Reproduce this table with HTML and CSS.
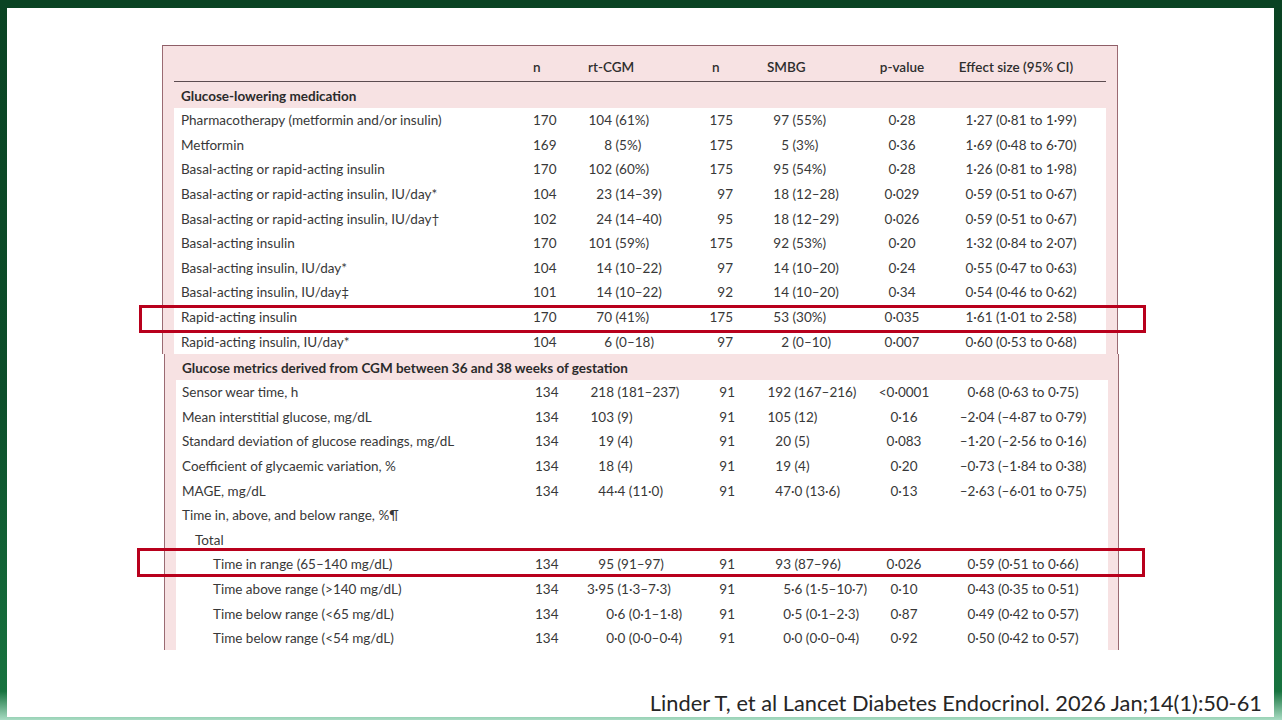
FILE: index.html
```html
<!DOCTYPE html>
<html lang="en">
<head>
<meta charset="utf-8">
<title>Table</title>
<link rel="stylesheet" href="styles.css">
</head>
<body>
<div class="slide">
  <section class="box box-a">
    <div class="row head">
      <div></div>
      <div class="h-n1">n</div>
      <div class="h-rt">rt-CGM</div>
      <div class="h-n2">n</div>
      <div class="h-sm">SMBG</div>
      <div class="h-p">p-value</div>
      <div class="h-ef">Effect size (95% CI)</div>
      <div></div>
    </div>
    <div class="sect">Glucose-lowering medication</div>
    <div class="white">
      <div class="row"><div class="lab">Pharmacotherapy (metformin and/or insulin)</div><div class="n1">170</div><div class="rt"><span class="a">104</span> (61%)</div><div class="n2">175</div><div class="sm"><span class="a">97</span> (55%)</div><div class="p">0·28</div><div class="ef">1·27 (0·81 to 1·99)</div></div>
      <div class="row"><div class="lab">Metformin</div><div class="n1">169</div><div class="rt"><span class="a">8</span> (5%)</div><div class="n2">175</div><div class="sm"><span class="a">5</span> (3%)</div><div class="p">0·36</div><div class="ef">1·69 (0·48 to 6·70)</div></div>
      <div class="row"><div class="lab">Basal-acting or rapid-acting insulin</div><div class="n1">170</div><div class="rt"><span class="a">102</span> (60%)</div><div class="n2">175</div><div class="sm"><span class="a">95</span> (54%)</div><div class="p">0·28</div><div class="ef">1·26 (0·81 to 1·98)</div></div>
      <div class="row"><div class="lab">Basal-acting or rapid-acting insulin, IU/day*</div><div class="n1">104</div><div class="rt"><span class="a">23</span> (14–39)</div><div class="n2">97</div><div class="sm"><span class="a">18</span> (12–28)</div><div class="p">0·029</div><div class="ef">0·59 (0·51 to 0·67)</div></div>
      <div class="row"><div class="lab">Basal-acting or rapid-acting insulin, IU/day†</div><div class="n1">102</div><div class="rt"><span class="a">24</span> (14–40)</div><div class="n2">95</div><div class="sm"><span class="a">18</span> (12–29)</div><div class="p">0·026</div><div class="ef">0·59 (0·51 to 0·67)</div></div>
      <div class="row"><div class="lab">Basal-acting insulin</div><div class="n1">170</div><div class="rt"><span class="a">101</span> (59%)</div><div class="n2">175</div><div class="sm"><span class="a">92</span> (53%)</div><div class="p">0·20</div><div class="ef">1·32 (0·84 to 2·07)</div></div>
      <div class="row"><div class="lab">Basal-acting insulin, IU/day*</div><div class="n1">104</div><div class="rt"><span class="a">14</span> (10–22)</div><div class="n2">97</div><div class="sm"><span class="a">14</span> (10–20)</div><div class="p">0·24</div><div class="ef">0·55 (0·47 to 0·63)</div></div>
      <div class="row"><div class="lab">Basal-acting insulin, IU/day‡</div><div class="n1">101</div><div class="rt"><span class="a">14</span> (10–22)</div><div class="n2">92</div><div class="sm"><span class="a">14</span> (10–20)</div><div class="p">0·34</div><div class="ef">0·54 (0·46 to 0·62)</div></div>
      <div class="row"><div class="lab">Rapid-acting insulin</div><div class="n1">170</div><div class="rt"><span class="a">70</span> (41%)</div><div class="n2">175</div><div class="sm"><span class="a">53</span> (30%)</div><div class="p">0·035</div><div class="ef">1·61 (1·01 to 2·58)</div></div>
      <div class="row"><div class="lab">Rapid-acting insulin, IU/day*</div><div class="n1">104</div><div class="rt"><span class="a">6</span> (0–18)</div><div class="n2">97</div><div class="sm"><span class="a">2</span> (0–10)</div><div class="p">0·007</div><div class="ef">0·60 (0·53 to 0·68)</div></div>
    </div>
  </section>
  <section class="box box-b">
    <div class="sect">Glucose metrics derived from CGM between 36 and 38 weeks of gestation</div>
    <div class="white">
      <div class="row"><div class="lab">Sensor wear time, h</div><div class="n1">134</div><div class="rt"><span class="a">218</span> (181–237)</div><div class="n2">91</div><div class="sm"><span class="a">192</span> (167–216)</div><div class="p">&lt;0·0001</div><div class="ef">0·68 (0·63 to 0·75)</div></div>
      <div class="row"><div class="lab">Mean interstitial glucose, mg/dL</div><div class="n1">134</div><div class="rt"><span class="a">103</span> (9)</div><div class="n2">91</div><div class="sm"><span class="a">105</span> (12)</div><div class="p">0·16</div><div class="ef">–2·04 (–4·87 to 0·79)</div></div>
      <div class="row"><div class="lab">Standard deviation of glucose readings, mg/dL</div><div class="n1">134</div><div class="rt"><span class="a">19</span> (4)</div><div class="n2">91</div><div class="sm"><span class="a">20</span> (5)</div><div class="p">0·083</div><div class="ef">–1·20 (–2·56 to 0·16)</div></div>
      <div class="row"><div class="lab">Coefficient of glycaemic variation, %</div><div class="n1">134</div><div class="rt"><span class="a">18</span> (4)</div><div class="n2">91</div><div class="sm"><span class="a">19</span> (4)</div><div class="p">0·20</div><div class="ef">–0·73 (–1·84 to 0·38)</div></div>
      <div class="row"><div class="lab">MAGE, mg/dL</div><div class="n1">134</div><div class="rt"><span class="a">44</span>·4 (11·0)</div><div class="n2">91</div><div class="sm"><span class="a">47</span>·0 (13·6)</div><div class="p">0·13</div><div class="ef">–2·63 (–6·01 to 0·75)</div></div>
      <div class="row"><div class="lab">Time in, above, and below range, %¶</div></div>
      <div class="row"><div class="lab ind1">Total</div></div>
      <div class="row"><div class="lab ind2">Time in range (65–140 mg/dL)</div><div class="n1">134</div><div class="rt"><span class="a">95</span> (91–97)</div><div class="n2">91</div><div class="sm"><span class="a">93</span> (87–96)</div><div class="p">0·026</div><div class="ef">0·59 (0·51 to 0·66)</div></div>
      <div class="row"><div class="lab ind2">Time above range (&gt;140 mg/dL)</div><div class="n1">134</div><div class="rt"><span class="a">3·95</span> (1·3–7·3)</div><div class="n2">91</div><div class="sm"><span class="a">5</span>·6 (1·5–10·7)</div><div class="p">0·10</div><div class="ef">0·43 (0·35 to 0·51)</div></div>
      <div class="row"><div class="lab ind2">Time below range (&lt;65 mg/dL)</div><div class="n1">134</div><div class="rt"><span class="a">0</span>·6 (0·1–1·8)</div><div class="n2">91</div><div class="sm"><span class="a">0</span>·5 (0·1–2·3)</div><div class="p">0·87</div><div class="ef">0·49 (0·42 to 0·57)</div></div>
      <div class="row"><div class="lab ind2">Time below range (&lt;54 mg/dL)</div><div class="n1">134</div><div class="rt"><span class="a">0</span>·0 (0·0–0·4)</div><div class="n2">91</div><div class="sm"><span class="a">0</span>·0 (0·0–0·4)</div><div class="p">0·92</div><div class="ef">0·50 (0·42 to 0·57)</div></div>
    </div>
  </section>
  <p class="cite">Linder T, et al Lancet Diabetes Endocrinol. 2026 Jan;14(1):50-61</p>
  <div class="hl hl1"></div>
  <div class="hl hl2"></div>
</div>
</body>
</html>
```

FILE: styles.css
```css
html, body {
  margin: 0;
  padding: 0;
}
body {
  width: 1282px;
  height: 720px;
  overflow: hidden;
  background: linear-gradient(180deg, #0a4323 0%, #0c4e2a 55%, #17733f 96%, #a8dcc3 100%);
  font-family: Lato, "Liberation Sans", sans-serif;
}
.slide {
  position: relative;
  margin: 8px 8px 0 7px;
  height: 709px;
  background: #ffffff;
  padding-top: 37px;
  box-sizing: border-box;
}
.box {
  box-sizing: border-box;
  background: #f7e2e3;
  border-left: 1px solid #9a6a72;
  border-right: 1px solid #9a6a72;
}
.box-a {
  margin-left: 155px;
  width: 956px;
  padding: 0 11px;
  border-top: 1px solid #8e5e67;
}
.box-b {
  margin-left: 157px;
  width: 955px;
  height: 296px;
  padding: 0 10px 0 11px;
  overflow: hidden;
}
.row {
  display: grid;
  grid-template-columns: 359px 51px 116px 34px 123px 90px 148px 11px;
  align-items: center;
  height: 24.6px;
  font-size: 13.5px;
  color: #383838;
  white-space: nowrap;
}
.row.head {
  height: 36px;
  align-items: end;
  padding-bottom: 6px;
  box-sizing: border-box;
  border-bottom: 1px solid #5c4c50;
  font-weight: 600;
  color: #2e2e2e;
}
.h-rt { padding-left: 4px; }
.h-n2 { padding-left: 12px; }
.h-sm { padding-left: 33px; }
.h-p { text-align: center; }
.h-ef { text-align: center; padding-right: 10px; }
.sect {
  box-sizing: border-box;
  height: 26px;
  padding-top: 3px;
  line-height: 22px;
  padding-left: 7px;
  font-size: 13.5px;
  font-weight: 700;
  color: #2b2b2b;
  white-space: nowrap;
}
.box-b .sect { padding-left: 6px; }
.white {
  background: #ffffff;
}
.lab { padding-left: 7px; }
.box-b .lab { padding-left: 6px; }
.box-b .lab.ind1 { padding-left: 19px; }
.box-b .lab.ind2 { padding-left: 37px; }
.rt .a {
  display: inline-block;
  width: 28px;
  text-align: right;
}
.sm { padding-left: 31px; }
.sm .a {
  display: inline-block;
  width: 24px;
  text-align: right;
}
.n2 { text-align: right; padding-right: 1px; }
.p { text-align: center; }
.ef { text-align: center; }
.cite {
  margin: 39px 12px 0 0;
  text-align: right;
  font-size: 21.8px;
  line-height: 28px;
  color: #262626;
}
.hl {
  position: absolute;
  border: 3px solid #b8001c;
  box-sizing: border-box;
}
.hl1 {
  left: 132px;
  top: 297px;
  width: 1007px;
  height: 28px;
}
.hl2 {
  left: 130px;
  top: 540px;
  width: 1008px;
  height: 29px;
}
```
